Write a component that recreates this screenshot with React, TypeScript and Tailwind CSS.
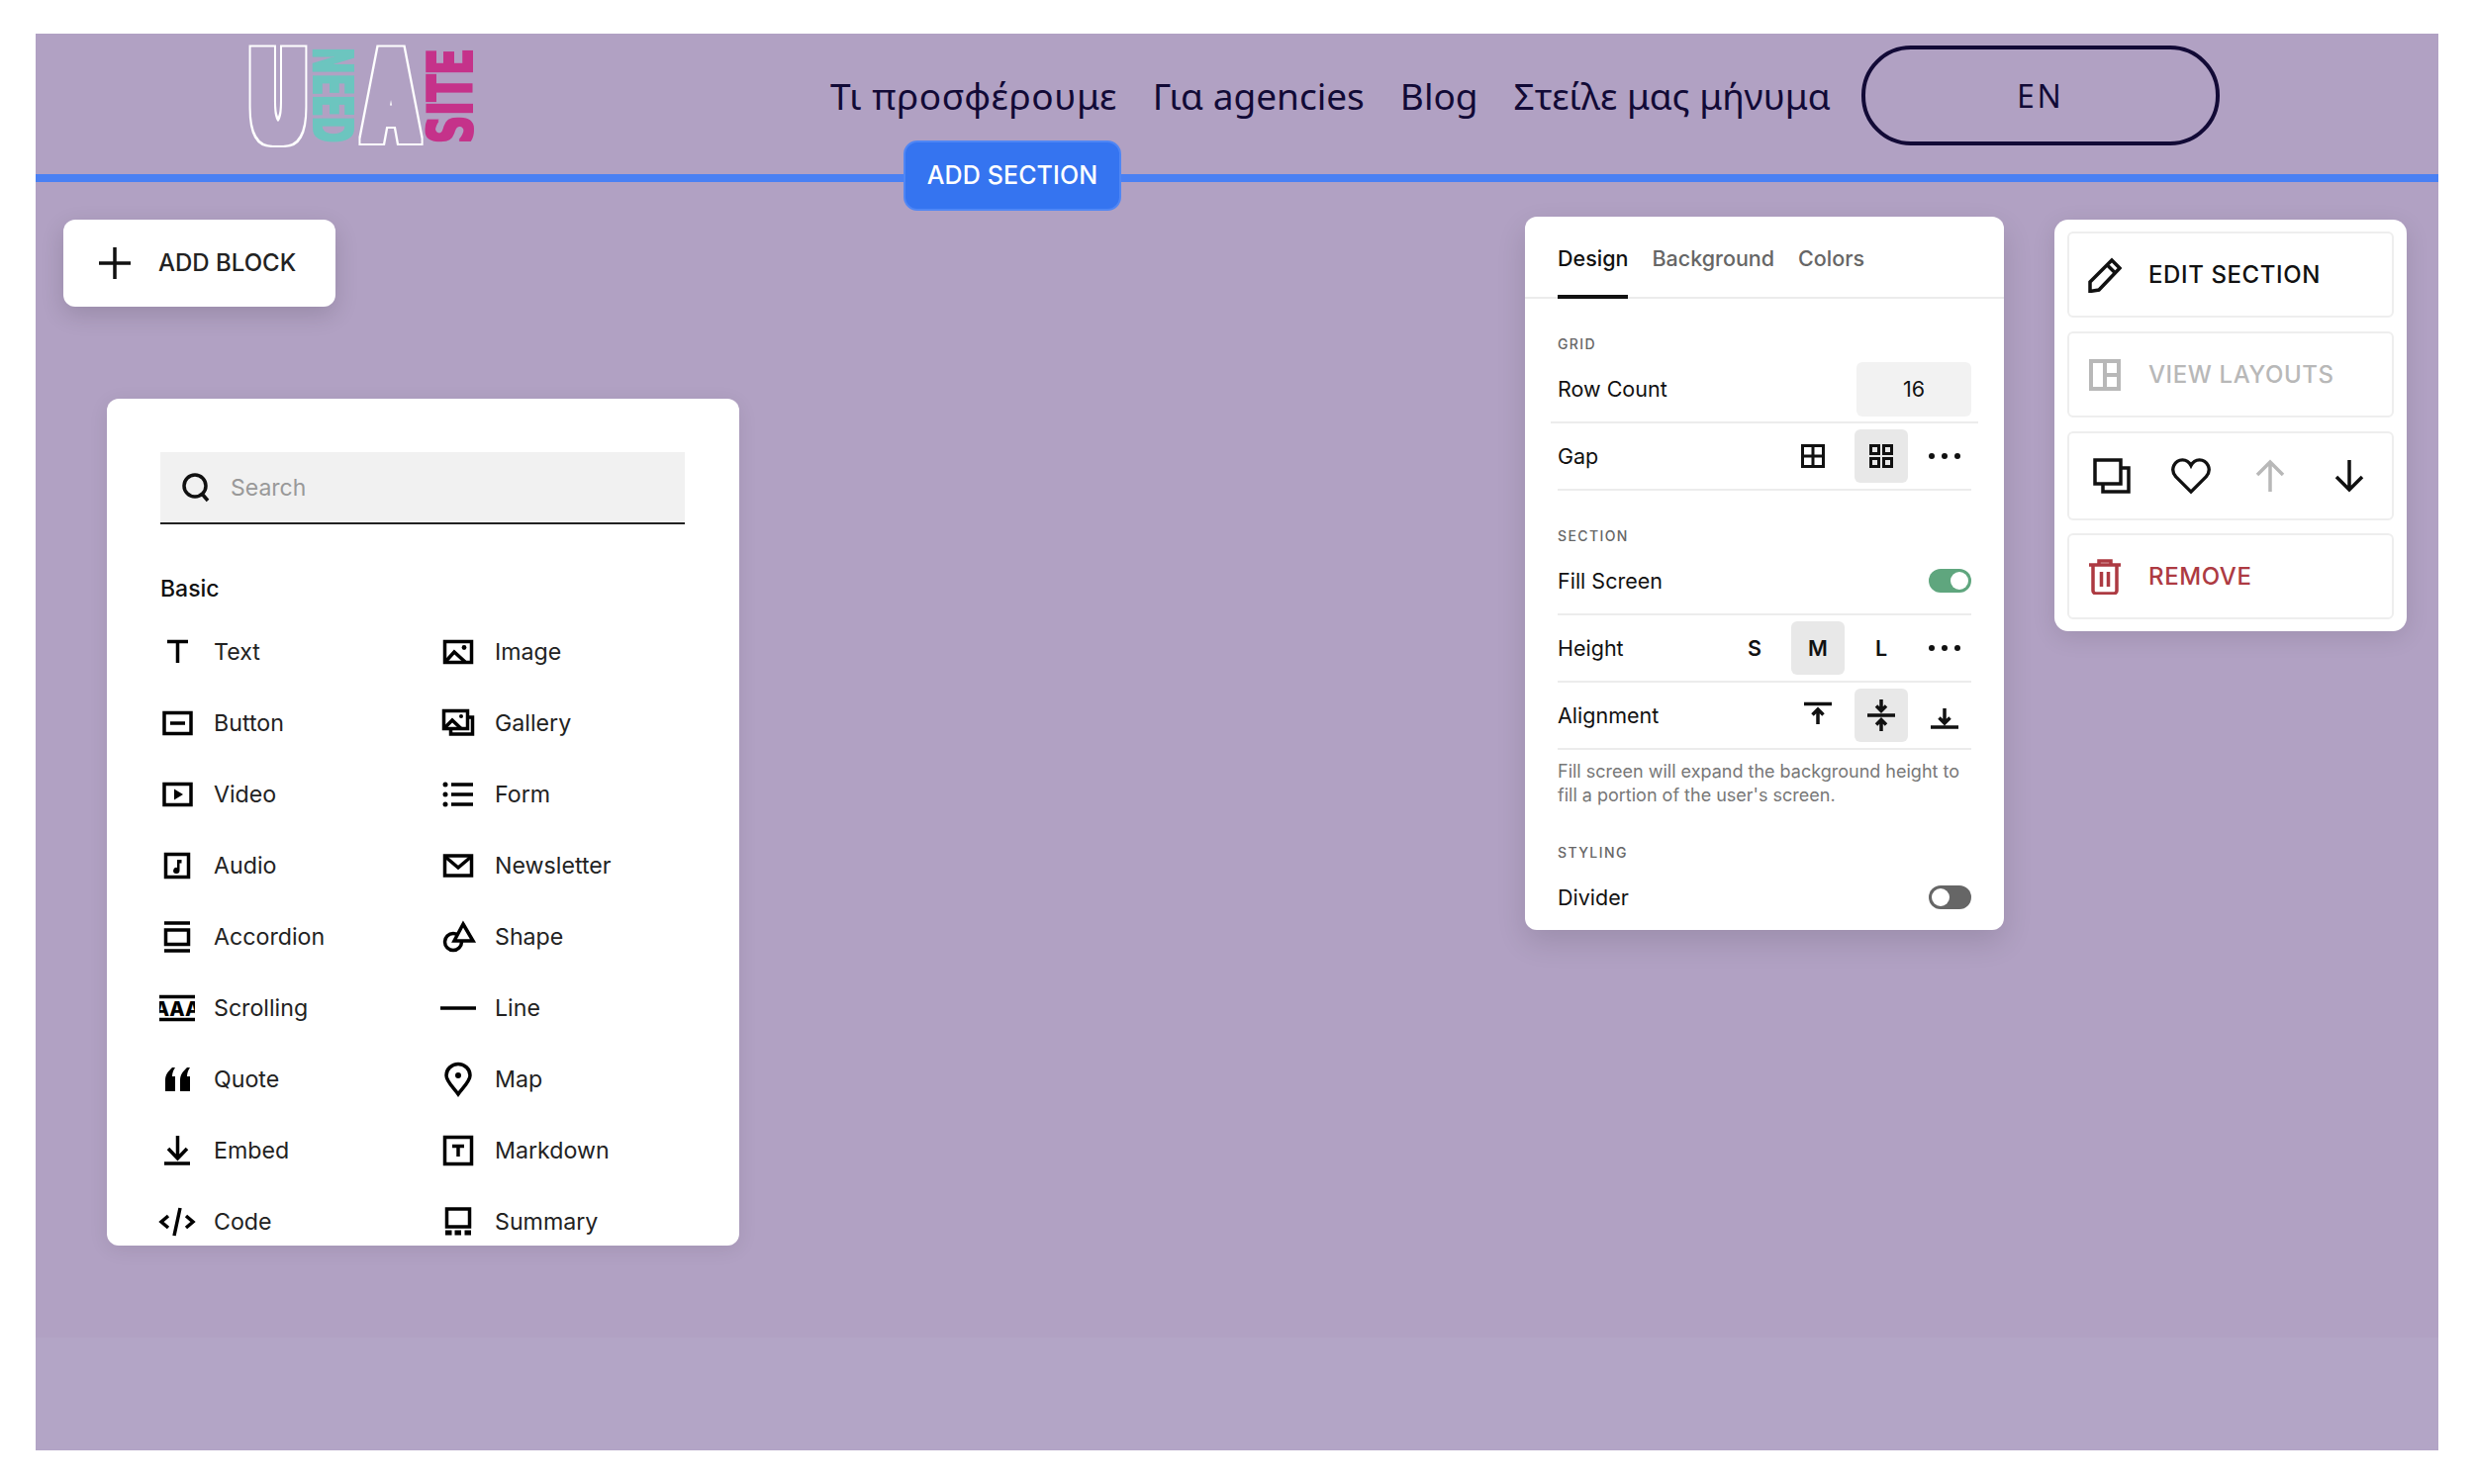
import React from 'react';

const Ico: React.FC<{ w?: number; h?: number; sw?: number; children: React.ReactNode }> = ({ w = 34, h = 28, sw = 3.5, children }) => (
  <svg width={w} height={h} viewBox={`0 0 ${w} ${h}`} fill="none" stroke="currentColor" strokeWidth={sw} className="shrink-0 overflow-visible">
    {children}
  </svg>
);

const blockItems: [string, React.ReactNode, string, React.ReactNode][] = [
  ['Text', <Ico><path d="M7 3.500h21M17.500 2v23" /></Ico>,
   'Image', <Ico><rect x="3.500" y="3.500" width="27" height="21" /><path d="M4 24l9-10 11 10" /><circle cx="23" cy="9.500" r="2.400" fill="currentColor" stroke="none" /></Ico>],
  ['Button', <Ico><rect x="4" y="3.500" width="27" height="21" /><path d="M10 14h15" /></Ico>,
   'Gallery', <Ico><rect x="2.500" y="1.500" width="24" height="18" /><path d="M9.500 20v5h22V8h-5" /><path d="M3 19l8-8 9 8.500" /><circle cx="20" cy="7" r="2" fill="currentColor" stroke="none" /></Ico>],
  ['Video', <Ico><rect x="4" y="3.500" width="27" height="21" /><path d="M14 8.500v11l9-5.500z" fill="currentColor" stroke="none" /></Ico>,
   'Form', <Ico><path d="M10 4h22M10 14h22M10 24h22" /><circle cx="4" cy="4" r="2.500" fill="currentColor" stroke="none" /><circle cx="4" cy="14" r="2.500" fill="currentColor" stroke="none" /><circle cx="4" cy="24" r="2.500" fill="currentColor" stroke="none" /></Ico>],
  ['Audio', <Ico><rect x="5.500" y="2.500" width="23" height="23" /><path d="M17 8h4.500v3.500H19.500V19a3.200 3 0 1 1-2.500-3z" fill="currentColor" stroke="none" /></Ico>,
   'Newsletter', <Ico><rect x="3.500" y="4" width="27" height="20" /><path d="M4 5l13 11 13-11" /></Ico>],
  ['Accordion', <Ico><path d="M4 0h26M4 28h26" /><rect x="5.500" y="7" width="23" height="14.500" /></Ico>,
   'Shape', <Ico><circle cx="12" cy="19" r="8.500" /><path d="M22 1L32 18H13z" fill="#fff" /></Ico>],
  ['Scrolling', <Ico w={36}><path d="M0 2.500h36M0 25.500h36" /><svg x="0" y="0" width="36" height="28"><text x="18" y="21.500" textAnchor="middle" fontSize="20" fontWeight="800" fontFamily="Inter, sans-serif" fill="currentColor" stroke="none">AAA</text></svg></Ico>,
   'Line', <Ico w={36}><path d="M0 14h36" /></Ico>],
  ['Quote', <Ico><path d="M5 26V15c0-6 3-9 7-13h3c-2 3-3 6-3 9h3v15zM20 26V15c0-6 3-9 7-13h3c-2 3-3 6-3 9h3v15z" fill="currentColor" stroke="none" /></Ico>,
   'Map', <Ico h={34}><path d="M17 32C12 25 5 19 5 13a12 11.500 0 0 1 24 0c0 6-7 12-12 19z" /><circle cx="17" cy="13" r="3" fill="currentColor" stroke="none" /></Ico>],
  ['Embed', <Ico><path d="M17.500-1v23M8 12l9.500 10L27 12M4 27h26" /></Ico>,
   'Markdown', <Ico h={30}><rect x="3.500" y="1.500" width="27" height="27" /><path d="M11 10.500h12M17 10.500V21" /></Ico>],
  ['Code', <Ico w={36} h={30}><path d="M9 9L2 15l7 6M27 9l7 6-7 6M21 1l-6 28" /></Ico>,
   'Summary', <Ico h={30}><rect x="5.500" y="2" width="23" height="18" /><path d="M4 26h6.500M13.500 26h6.500M23.500 26H30" strokeWidth={5} /></Ico>],
];

const Toggle: React.FC<{ on?: boolean }> = ({ on }) => (
  <div className={`w-[43px] h-6 rounded-full flex items-center px-[3px] ${on ? 'bg-[#5fa67e] justify-end' : 'bg-[#666666] justify-start'}`}>
    <div className="w-[18px] h-[18px] rounded-full bg-white" />
  </div>
);

const Dots = () => (
  <svg width="32" height="8" viewBox="0 0 32 8" fill="currentColor">
    <circle cx="3" cy="4" r="3" /><circle cx="16" cy="4" r="3" /><circle cx="29" cy="4" r="3" />
  </svg>
);

const Opt: React.FC<{ active?: boolean; className?: string; children: React.ReactNode }> = ({ active, className = '', children }) => (
  <div className={`w-[54px] h-[54px] rounded-md flex items-center justify-center font-semibold ${active ? 'bg-[#e8e8e8]' : ''} ${className}`}>
    {children}
  </div>
);

const Row: React.FC<{ label: string; wide?: boolean; last?: boolean; children: React.ReactNode }> = ({ label, wide, last, children }) => (
  <div className={`flex items-center justify-between ${last ? 'h-[66px]' : 'h-[68px] border-b-2 border-[#ececec]'} ${wide ? '-mx-[7px] px-[7px]' : ''}`}>
    <span>{label}</span>
    {children}
  </div>
);

const Label: React.FC<{ className?: string; children: React.ReactNode }> = ({ className = '', children }) => (
  <div className={`h-[22px] leading-5 text-[14px] font-medium tracking-[0.1em] text-[#666666] ${className}`}>{children}</div>
);

export default function App() {
  return (
    <div className="min-h-[1500px] bg-white pt-[34px] px-[36px]" style={{ fontFamily: 'Inter, "Liberation Sans", sans-serif' }}>
      <div className="h-[1432px] bg-[linear-gradient(#b1a1c3_0,#b1a1c3_1318px,#b3a5c6_1318px)] overflow-hidden">
        {/* header */}
        <header className="h-[142px] flex items-start text-[#120a36]">
          <svg width="228" height="100" viewBox="0 0 228 100" className="ml-[216px] mt-[13px] shrink-0 overflow-visible" fontFamily='"DejaVu Sans", sans-serif' fontWeight="700">
            <defs>
              <filter id="logo-ring" filterUnits="userSpaceOnUse" x="-20" y="-20" width="280" height="140">
                <feMorphology in="SourceAlpha" operator="dilate" radius="4.500 1.500" result="thick" />
                <feMorphology in="thick" operator="dilate" radius="1.500" result="outer" />
                <feComposite in="outer" in2="thick" operator="out" result="ring" />
                <feFlood floodColor="#ffffff" />
                <feComposite in2="ring" operator="in" />
              </filter>
              <filter id="logo-heavy" filterUnits="userSpaceOnUse" x="-20" y="-60" width="140" height="120">
                <feMorphology operator="dilate" radius="1 0.800" />
              </filter>
            </defs>
            <text x="0" y="96" fontSize="128" textLength="58" lengthAdjust="spacingAndGlyphs" filter="url(#logo-ring)">U</text>
            <text transform="translate(65,1) rotate(90)" fontSize="55" textLength="96" lengthAdjust="spacingAndGlyphs" fill="#6cc5bf" filter="url(#logo-heavy)">NEED</text>
            <text x="117" y="96" fontSize="128" textLength="52" lengthAdjust="spacingAndGlyphs" filter="url(#logo-ring)">A</text>
            <text transform="translate(225,98) rotate(-90)" fontSize="63" textLength="96" lengthAdjust="spacingAndGlyphs" fill="#c5338a" filter="url(#logo-heavy)">SITE</text>
          </svg>
          <nav className="ml-[359px] mt-[12px] h-[101px] flex items-center gap-[36px] text-[37px] whitespace-nowrap" style={{ fontFamily: '"Noto Sans", sans-serif' }}>
            <span className="tracking-[0.015em]">Τι προσφέρουμε</span>
            <span>Για agencies</span>
            <span>Blog</span>
            <span>Στείλε μας μήνυμα</span>
          </nav>
          <div className="ml-[31px] mt-[12px] w-[362px] h-[101px] rounded-[50px] border-[4px] border-[#120a36] flex items-center justify-center text-[32px] tracking-[0.08em]" style={{ fontFamily: '"Noto Sans", sans-serif' }}>
            EN
          </div>
        </header>

        {/* section line */}
        <div className="relative h-2 bg-[#4a80f3]">
          <button className="absolute left-[877px] -top-[34px] w-[220px] h-[71px] rounded-[14px] bg-[#3574f0] border-2 border-[#4f86f5] text-white text-[25px] font-medium tracking-[0.005em]">
            ADD SECTION
          </button>
        </div>

        <div className="flex items-start pl-[28px] pt-[35px]">
          {/* left column */}
          <div className="w-[683px] shrink-0 pt-[3px]">
            <div className="w-[275px] h-[88px] bg-white rounded-xl shadow-[0_8px_24px_rgba(0,0,0,0.14)] flex items-center pl-[36px] text-[#222222] text-[24px] font-medium">
              <svg width="32" height="32" viewBox="0 0 32 32" stroke="#111111" strokeWidth="3.500" className="shrink-0"><path d="M0 16h32M16 0v32" /></svg>
              <span className="ml-[28px]">ADD BLOCK</span>
            </div>
            <div className="ml-[44px] mt-[93px] w-[639px] h-[856px] bg-white rounded-xl overflow-hidden pl-[54px] pr-[55px] pt-[54px] shadow-[0_4px_20px_rgba(0,0,0,0.08)]">
              <div className="h-[73px] bg-[#f1f1f1] border-b-2 border-[#222222] flex items-center pl-[22px]">
                <svg width="28" height="30" viewBox="0 0 28 30" fill="none" stroke="#111111" strokeWidth="3.500"><ellipse cx="13" cy="13" rx="11" ry="11" /><path d="M20 21l6 7" /></svg>
                <span className="ml-[21px] pt-[2px] text-[23px] text-[#999999]">Search</span>
              </div>
              <div className="mt-[49px] h-8 leading-8 text-[23px] font-medium text-[#111111]">Basic</div>
              <div className="mt-[12px] grid grid-cols-[284px_1fr] auto-rows-[72px] text-[23.200px] text-[#222222]">
                {blockItems.map(([a, ia, b, ib]) => (
                  <React.Fragment key={a}>
                    <div className="flex items-center text-black">
                      <div className="w-[34px] flex justify-center">{ia}</div>
                      <span className="ml-5 text-[#222222]">{a}</span>
                    </div>
                    <div className="flex items-center text-black">
                      <div className="w-[34px] flex justify-center">{ib}</div>
                      <span className="ml-5 text-[#222222]">{b}</span>
                    </div>
                  </React.Fragment>
                ))}
              </div>
            </div>
          </div>

          {/* design panel */}
          <div className="ml-[794px] w-[484px] h-[721px] shrink-0 bg-white rounded-xl overflow-hidden text-[21.500px] text-[#111111] shadow-[0_12px_30px_rgba(0,0,0,0.12)]">
            <div className="h-[83px] border-b-2 border-[#ececec] flex items-start px-[33px] pt-[26px] gap-[24px] text-[#666666] font-medium">
              <div className="h-[57px] border-b-[4px] border-[#111111] text-[#111111]">Design</div>
              <div>Background</div>
              <div>Colors</div>
            </div>
            <div className="px-[33px]">
              <Label className="mt-[36px]">GRID</Label>
              <Row label="Row Count" wide>
                <div className="w-[116px] h-[55px] rounded-md bg-[#f2f2f2] flex items-center justify-center">16</div>
              </Row>
              <Row label="Gap">
                <div className="flex gap-[10px]">
                  <Opt className="pr-[10px]"><svg width="24" height="24" viewBox="0 0 24 24" fill="none" stroke="#111111" strokeWidth="3"><rect x="1.500" y="1.500" width="21" height="21" /><path d="M12 1v22M1 12h22" /></svg></Opt>
                  <Opt active><svg width="24" height="24" viewBox="0 0 24 24" fill="none" stroke="#111111" strokeWidth="3"><rect x="1.500" y="1.500" width="8" height="8" /><rect x="14.500" y="1.500" width="8" height="8" /><rect x="1.500" y="14.500" width="8" height="8" /><rect x="14.500" y="14.500" width="8" height="8" /></svg></Opt>
                  <Opt><Dots /></Opt>
                </div>
              </Row>
              <Label className="mt-[36px]">SECTION</Label>
              <Row label="Fill Screen"><Toggle on /></Row>
              <Row label="Height">
                <div className="flex gap-[10px]">
                  <Opt>S</Opt>
                  <Opt active>M</Opt>
                  <Opt>L</Opt>
                  <Opt><Dots /></Opt>
                </div>
              </Row>
              <Row label="Alignment">
                <div className="flex gap-[10px]">
                  <Opt><svg width="28" height="28" viewBox="0 0 28 28" fill="none" stroke="#111111" strokeWidth="3.500"><path d="M0 2.500h28M14 8v15M8.500 13.500L14 8l5.500 5.500" /></svg></Opt>
                  <Opt active><svg width="28" height="36" viewBox="0 0 28 36" fill="none" stroke="#111111" strokeWidth="3.500"><path d="M0 18h28M14 2v11M9 8.500l5 5 5-5M14 34V23M9 27.500l5-5 5 5" /></svg></Opt>
                  <Opt><svg width="28" height="28" viewBox="0 0 28 28" fill="none" stroke="#111111" strokeWidth="3.500"><path d="M0 26h28M14 7v15M8.500 16.500L14 22l5.500-5.500" /></svg></Opt>
                </div>
              </Row>
              <p className="mt-[10px] text-[18px] leading-6 text-[#777777] whitespace-nowrap">
                Fill screen will expand the background height to<br />fill a portion of the user&apos;s screen.
              </p>
              <Label className="mt-[36px]">STYLING</Label>
              <Row label="Divider" last><Toggle /></Row>
            </div>
          </div>

          {/* section actions */}
          <div className="ml-[51px] mt-[3px] w-[356px] h-[416px] shrink-0 bg-white rounded-[14px] px-[13px] pt-[12px] flex flex-col gap-[14px] text-[24px] font-medium tracking-[0.025em] shadow-[0_6px_24px_rgba(0,0,0,0.1)]">
            <div className="h-[87px] border-2 border-[#eeeeee] rounded-md flex items-center pl-[19px] text-[#111111]">
              <svg width="34" height="36" viewBox="0 0 34 36" fill="none" stroke="currentColor" strokeWidth="3.500"><path d="M24 3l8 8L11 33l-9 1.500V25zM19.500 8l8 8" /></svg>
              <span className="ml-[27px]">EDIT SECTION</span>
            </div>
            <div className="h-[87px] border-2 border-[#eeeeee] rounded-md flex items-center pl-[19px] text-[#b8b8b8]">
              <svg width="34" height="34" viewBox="0 0 34 34" fill="none" stroke="currentColor" strokeWidth="4"><rect x="3" y="3" width="28" height="28" /><path d="M17 3v28M17 17h14" /></svg>
              <span className="ml-[27px]">VIEW LAYOUTS</span>
            </div>
            <div className="h-[90px] border-2 border-[#eeeeee] rounded-md grid grid-cols-[80px_80px_80px_80px] items-center justify-items-center pl-[3px] text-[#111111]">
              <svg width="38" height="36" viewBox="0 0 38 36" fill="none" stroke="currentColor" strokeWidth="3.500"><rect x="2" y="2" width="26" height="24" /><path d="M28 10h8v24H10v-8" /></svg>
              <svg width="40" height="38" viewBox="0 0 42 38" fill="none" stroke="currentColor" strokeWidth="3.500"><path d="M21 36L5 20C-2 12 4 2 12 2c4 0 7 2 9 6 2-4 5-6 9-6 8 0 14 10 7 18z" /></svg>
              <svg width="30" height="34" viewBox="0 0 30 34" fill="none" stroke="#b8b8b8" strokeWidth="3.500"><path d="M15 33V3M2 16L15 3l13 13" /></svg>
              <svg width="30" height="34" viewBox="0 0 30 34" fill="none" stroke="currentColor" strokeWidth="3.500"><path d="M15 1v30M2 18l13 13 13-13" /></svg>
            </div>
            <div className="-mt-px h-[87px] border-2 border-[#eeeeee] rounded-md flex items-center pl-[19px] text-[#ad3a42]">
              <svg width="34" height="36" viewBox="0 0 34 36" fill="none" stroke="currentColor" strokeWidth="3.500"><path d="M1 6h32M11 5V2h12v3M5 6v26a3 3 0 0 0 3 3h18a3 3 0 0 0 3-3V6M13.500 13v15M20.500 13v15" /></svg>
              <span className="ml-[27px]">REMOVE</span>
            </div>
          </div>
        </div>
      </div>
    </div>
  );
}
